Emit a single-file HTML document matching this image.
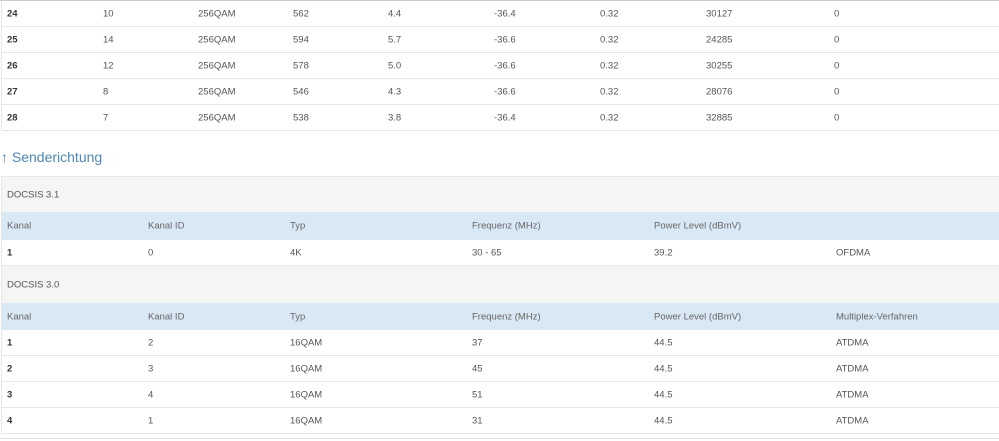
<!DOCTYPE html>
<html><head><style>
body{margin:0;width:999px;height:441px;background:#fff;font-family:"Liberation Sans",sans-serif;font-size:9.5px;color:#555;position:relative;overflow:hidden}
.r{position:absolute;left:1px;right:0;border-bottom:1px solid #e6e6e6;border-left:1px solid #e6e6e6}
.r span{position:absolute;top:50%;transform:translateY(-50%);white-space:nowrap;margin-left:-1px}
.b{font-weight:bold;color:#333}
.g{background:#f5f5f3}
.h{background:#d9e8f5;color:#666}
</style></head><body>
<div style="position:absolute;left:0;right:0;top:0;height:1px;background:#ccc"></div>
<div class="r" style="top:1px;height:25px"><span class="b" style="left:6px">24</span><span style="left:102px">10</span><span style="left:197px">256QAM</span><span style="left:292px">562</span><span style="left:387px">4.4</span><span style="left:493px">-36.4</span><span style="left:599px">0.32</span><span style="left:705px">30127</span><span style="left:833px">0</span></div>
<div class="r" style="top:27px;height:25px"><span class="b" style="left:6px">25</span><span style="left:102px">14</span><span style="left:197px">256QAM</span><span style="left:292px">594</span><span style="left:387px">5.7</span><span style="left:493px">-36.6</span><span style="left:599px">0.32</span><span style="left:705px">24285</span><span style="left:833px">0</span></div>
<div class="r" style="top:53px;height:25px"><span class="b" style="left:6px">26</span><span style="left:102px">12</span><span style="left:197px">256QAM</span><span style="left:292px">578</span><span style="left:387px">5.0</span><span style="left:493px">-36.6</span><span style="left:599px">0.32</span><span style="left:705px">30255</span><span style="left:833px">0</span></div>
<div class="r" style="top:79px;height:25px"><span class="b" style="left:6px">27</span><span style="left:102px">8</span><span style="left:197px">256QAM</span><span style="left:292px">546</span><span style="left:387px">4.3</span><span style="left:493px">-36.6</span><span style="left:599px">0.32</span><span style="left:705px">28076</span><span style="left:833px">0</span></div>
<div class="r" style="top:105px;height:25px"><span class="b" style="left:6px">28</span><span style="left:102px">7</span><span style="left:197px">256QAM</span><span style="left:292px">538</span><span style="left:387px">3.8</span><span style="left:493px">-36.4</span><span style="left:599px">0.32</span><span style="left:705px">32885</span><span style="left:833px">0</span></div>
<div style="position:absolute;left:1px;top:149px;font-size:14px;color:#4f86b3">↑ Senderichtung</div>
<div class="r g" style="top:176px;height:36px;border-top:1px solid #e6e6e6;border-bottom:none"><span style="left:6px">DOCSIS 3.1</span></div>
<div class="r h" style="top:212px;height:28px;border-bottom:none"><span style="left:6px">Kanal</span><span style="left:147px">Kanal ID</span><span style="left:289px">Typ</span><span style="left:471px">Frequenz (MHz)</span><span style="left:653px">Power Level (dBmV)</span></div>
<div class="r" style="top:240px;height:25px"><span class="b" style="left:6px">1</span><span style="left:147px">0</span><span style="left:289px">4K</span><span style="left:471px">30 - 65</span><span style="left:653px">39.2</span><span style="left:835px">OFDMA</span></div>
<div class="r g" style="top:266px;height:37px;border-bottom:none"><span style="left:6px">DOCSIS 3.0</span></div>
<div class="r h" style="top:303px;height:27px;border-bottom:none"><span style="left:6px">Kanal</span><span style="left:147px">Kanal ID</span><span style="left:289px">Typ</span><span style="left:471px">Frequenz (MHz)</span><span style="left:653px">Power Level (dBmV)</span><span style="left:835px">Multiplex-Verfahren</span></div>
<div class="r" style="top:330px;height:25px"><span class="b" style="left:6px">1</span><span style="left:147px">2</span><span style="left:289px">16QAM</span><span style="left:471px">37</span><span style="left:653px">44.5</span><span style="left:835px">ATDMA</span></div>
<div class="r" style="top:356px;height:25px"><span class="b" style="left:6px">2</span><span style="left:147px">3</span><span style="left:289px">16QAM</span><span style="left:471px">45</span><span style="left:653px">44.5</span><span style="left:835px">ATDMA</span></div>
<div class="r" style="top:382px;height:25px"><span class="b" style="left:6px">3</span><span style="left:147px">4</span><span style="left:289px">16QAM</span><span style="left:471px">51</span><span style="left:653px">44.5</span><span style="left:835px">ATDMA</span></div>
<div class="r" style="top:408px;height:25px"><span class="b" style="left:6px">4</span><span style="left:147px">1</span><span style="left:289px">16QAM</span><span style="left:471px">31</span><span style="left:653px">44.5</span><span style="left:835px">ATDMA</span></div>
<div style="position:absolute;left:0;right:0;top:438px;height:1px;background:#e0e0e0"></div>
</body></html>
